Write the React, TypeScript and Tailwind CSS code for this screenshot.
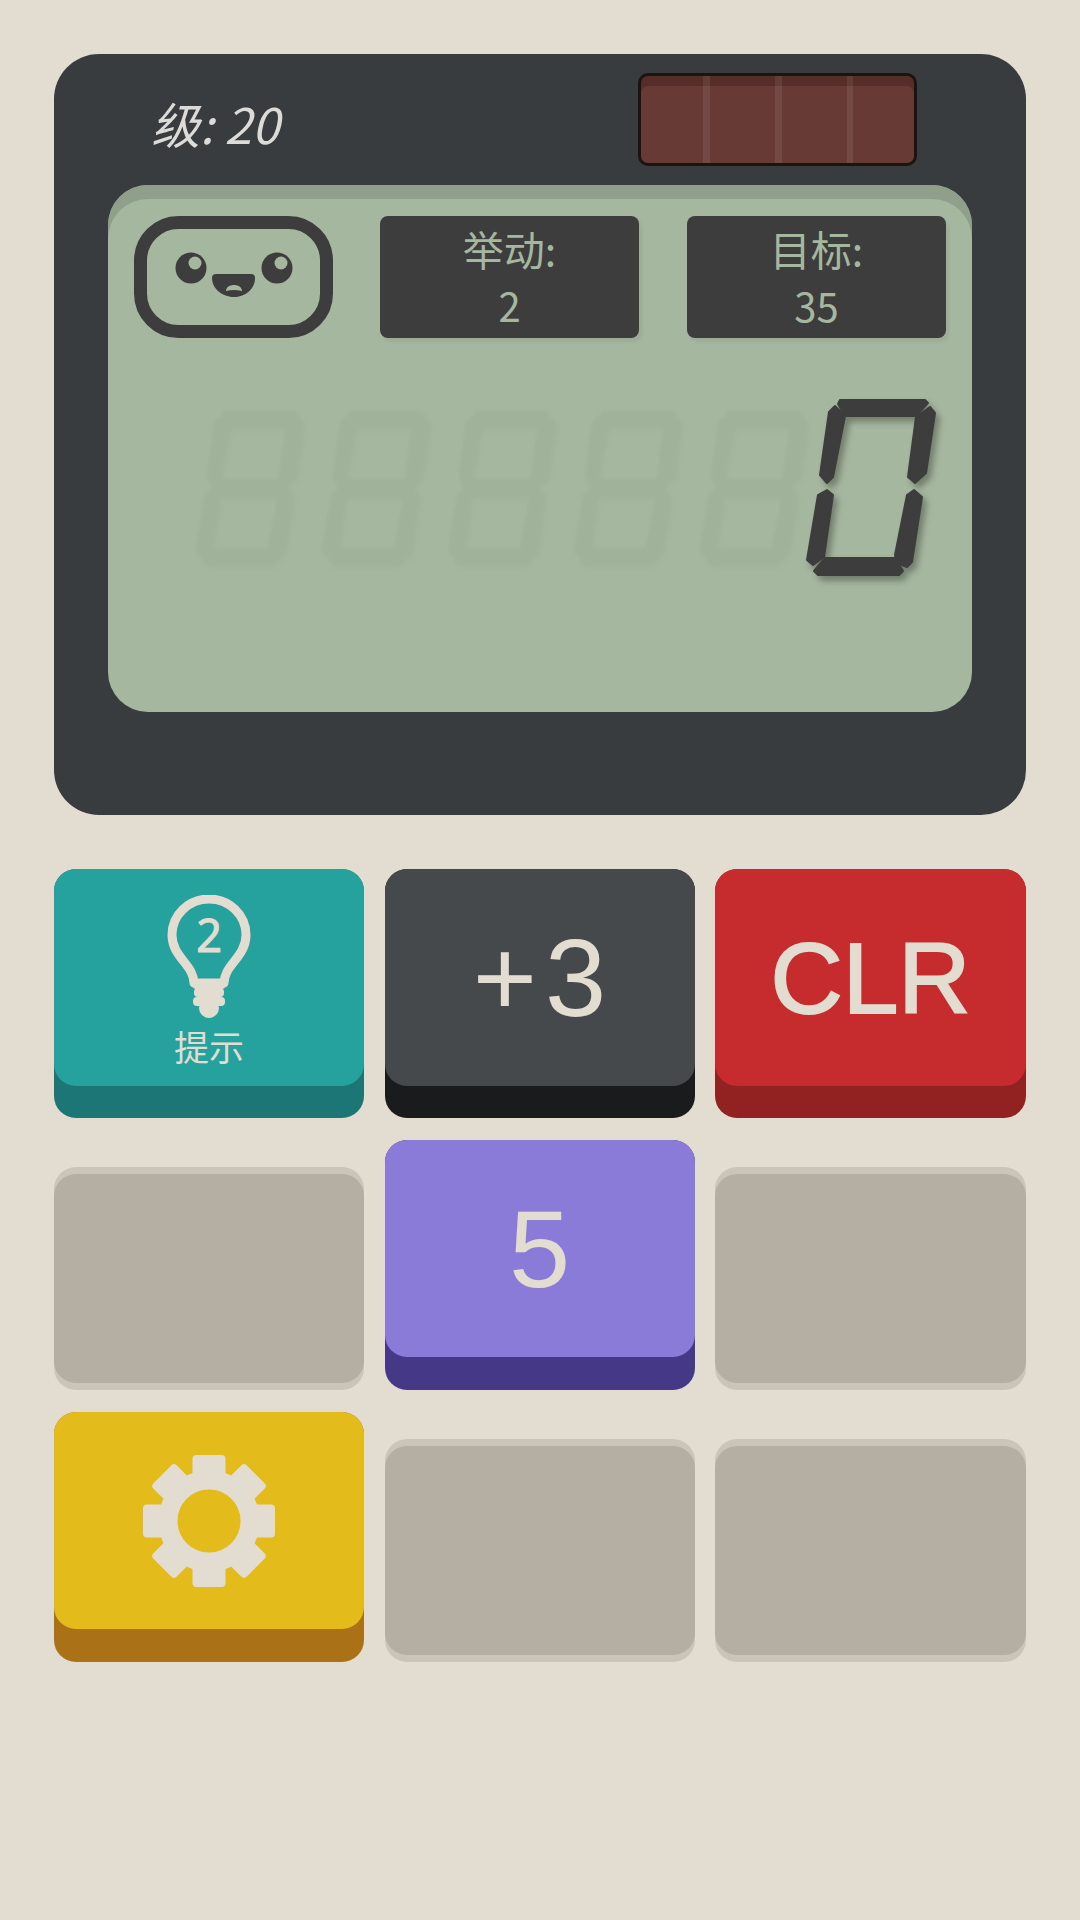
import React from 'react';

const segments = [
  '33,0 118,0 121,3 109,16 38,16 31,4',
  '28,6 38,16 26,77 20,83 13,75 22,12',
  '123,7 128,13 119,73 108,83 101,77 109,17',
  '20,90 26,95 17,157 6,165 0,160 11,95',
  '107,90 115,97 105,162 100,167 90,163 88,155 100,95',
  '18,158 88,158 96,171 92,175 11,175 7,171',
];
const middle = '17,87 27,79 101,79 110,87 100,96 26,96';

const GhostDigit = () => (
  <svg viewBox="0 0 128 175" preserveAspectRatio="none" className="w-[105px] h-[151px] mt-[12px] shrink-0 overflow-visible blur-[1px] drop-shadow-[2px_3px_2px_rgba(90,105,85,0.06)]">
    {[...segments, middle].map((points) => (
      <polygon key={points} points={points} fill="#a1b29b" stroke="#a1b29b" strokeWidth="2" strokeLinejoin="round" />
    ))}
  </svg>
);

const LitDigit = () => (
  <svg viewBox="0 0 128 175" className="w-[128px] h-[175px] -ml-[20px] shrink-0 overflow-visible drop-shadow-[4px_5px_3px_rgba(50,60,45,0.45)]">
    {segments.map((points) => (
      <polygon key={points} points={points} fill="#3d3d3d" stroke="#3d3d3d" strokeWidth="2" strokeLinejoin="round" />
    ))}
  </svg>
);

const Face = () => (
  <svg viewBox="0 0 199 122" className="w-[199px] h-[122px] shrink-0">
    <rect x="6.5" y="6.5" width="186" height="109" rx="38" fill="none" stroke="#3d3d3d" strokeWidth="13" />
    <circle cx="57" cy="52" r="15.5" fill="#3d3d3d" />
    <circle cx="61" cy="47" r="6.5" fill="#a6b7a0" />
    <circle cx="143" cy="52" r="15.5" fill="#3d3d3d" />
    <circle cx="147" cy="47" r="6.5" fill="#a6b7a0" />
    <path d="M82 58 H117 Q121 58 121 62 C121 74 110 81 100 81 C90 81 78 74 78 62 Q78 58 82 58 Z" fill="#3d3d3d" />
    <path d="M92 75 C92 67 108 67 108 75 Q100 73 92 75 Z" fill="#a6b7a0" />
  </svg>
);

const Stat = ({ label, value }: { label: string; value: string }) => (
  <div className="w-[259px] h-[122px] rounded-lg bg-[#3d3d3d] text-[#a6b7a0] text-[41px] leading-[57px] text-center pt-[4px] shadow-[3px_4px_3px_rgba(120,135,115,0.2)]">
    <div>{label}</div>
    <div className="text-[40px]">{value}</div>
  </div>
);

const BulbIcon = () => (
  <svg viewBox="0 0 96 124" className="w-[96px] h-[124px]">
    <path d="M33 88 C33 70 11 62 11 40 A37 36 0 0 1 85 40 C85 62 63 70 63 88 Z" fill="none" stroke="#e3dcd0" strokeWidth="9" strokeLinejoin="round" />
    <rect x="32" y="85" width="32" height="9" rx="3" fill="#e3dcd0" />
    <rect x="33" y="93" width="30" height="9" rx="4" fill="#e3dcd0" />
    <rect x="32" y="102" width="32" height="9" rx="4" fill="#e3dcd0" />
    <circle cx="48" cy="113" r="10" fill="#e3dcd0" />
    <text x="48" y="57" textAnchor="middle" fontSize="45" fontFamily="Noto Sans, sans-serif" fill="#e3dcd0" stroke="#e3dcd0" strokeWidth="1" strokeLinejoin="round">2</text>
  </svg>
);

const GearIcon = () => (
  <svg viewBox="0 0 134 134" className="w-[134px] h-[134px]">
    <circle cx="67" cy="67" r="41" fill="none" stroke="#e3dcd0" strokeWidth="19" />
    {[0, 45, 90, 135, 180, 225, 270, 315].map((angle) => (
      <rect key={angle} x="50.5" y="1" width="33" height="32" rx="4" fill="#e3dcd0" transform={`rotate(${angle} 67 67)`} />
    ))}
  </svg>
);

const Key = ({ face, base, children }: { face: string; base: string; children?: React.ReactNode }) => (
  <div className={`h-full rounded-[22px] ${base}`}>
    <div className={`h-[217px] rounded-[22px] flex items-center justify-center text-[#e3dcd0] ${face}`}>
      {children}
    </div>
  </div>
);

const EmptyKey = () => (
  <div className="h-[223px] mt-[27px] pt-[7px] rounded-[22px] bg-[#cbc5b9]">
    <div className="h-[209px] rounded-[22px] bg-[#b5aea2]" />
  </div>
);

export default function App() {
  return (
    <div className="w-[1080px] h-[1920px] bg-[#e3dcd0] px-[54px] pt-[54px] font-['Noto_Sans_CJK_SC',sans-serif]">
      <div className="h-[761px] rounded-[45px] bg-[#383c3f] px-[54px] pt-[19px]">
        <div className="h-[93px] flex items-center justify-between pr-[55px]">
          <div className="ml-[43px] text-[49px] italic text-[#dcdbd8] leading-none mt-[6px]">级: 20</div>
          <div className="relative w-[279px] h-[93px] rounded-[10px] border-[3px] border-[#1a1512] bg-[#673a35] shadow-[inset_0_10px_0_#562d28] overflow-hidden">
            <div className="absolute top-0 bottom-0 left-[62px] w-[7px] bg-white/8" />
            <div className="absolute top-0 bottom-0 left-[134px] w-[7px] bg-white/8" />
            <div className="absolute top-0 bottom-0 left-[206px] w-[6px] bg-white/8" />
          </div>
        </div>

        <div className="mt-[19px] h-[527px] rounded-[40px] bg-[#a6b7a0] shadow-[inset_0_14px_0_#8f9f8a] px-[26px] pt-[31px]">
          <div className="flex items-start">
            <Face />
            <div className="ml-[47px]">
              <Stat label="举动:" value="2" />
            </div>
            <div className="ml-[48px]">
              <Stat label="目标:" value="35" />
            </div>
          </div>
          <div className="mt-[62px] ml-[63px] flex items-start gap-[21px]">
            <GhostDigit />
            <GhostDigit />
            <GhostDigit />
            <GhostDigit />
            <GhostDigit />
            <LitDigit />
          </div>
        </div>
      </div>

      <div className="mt-[54px] grid grid-cols-[310px_310px_311px] grid-rows-[249px_250px_250px] gap-x-[20.5px] gap-y-[22px] font-['Liberation_Sans',sans-serif]">
        <Key face="bg-[#25a29d]" base="bg-[#1b7675]">
          <div className="flex flex-col items-center pt-[2px]">
            <BulbIcon />
            <div className="mt-[9px] text-[35px] leading-[35px] font-['Noto_Sans_CJK_SC',sans-serif]">提示</div>
          </div>
        </Key>
        <Key face="bg-[#46494c]" base="bg-[#191b1d]">
          <span className="text-[110px] leading-none tracking-[8px] pl-[8px]">+3</span>
        </Key>
        <Key face="bg-[#c62c2d]" base="bg-[#922222]">
          <span className="text-[100px] leading-none [-webkit-text-stroke:2px_#e3dcd0]">CLR</span>
        </Key>

        <EmptyKey />
        <Key face="bg-[#8a7bd8]" base="bg-[#453887]">
          <span className="text-[110px] leading-none">5</span>
        </Key>
        <EmptyKey />

        <Key face="bg-[#e3bc1c]" base="bg-[#ab7116]">
          <GearIcon />
        </Key>
        <EmptyKey />
        <EmptyKey />
      </div>
    </div>
  );
}
